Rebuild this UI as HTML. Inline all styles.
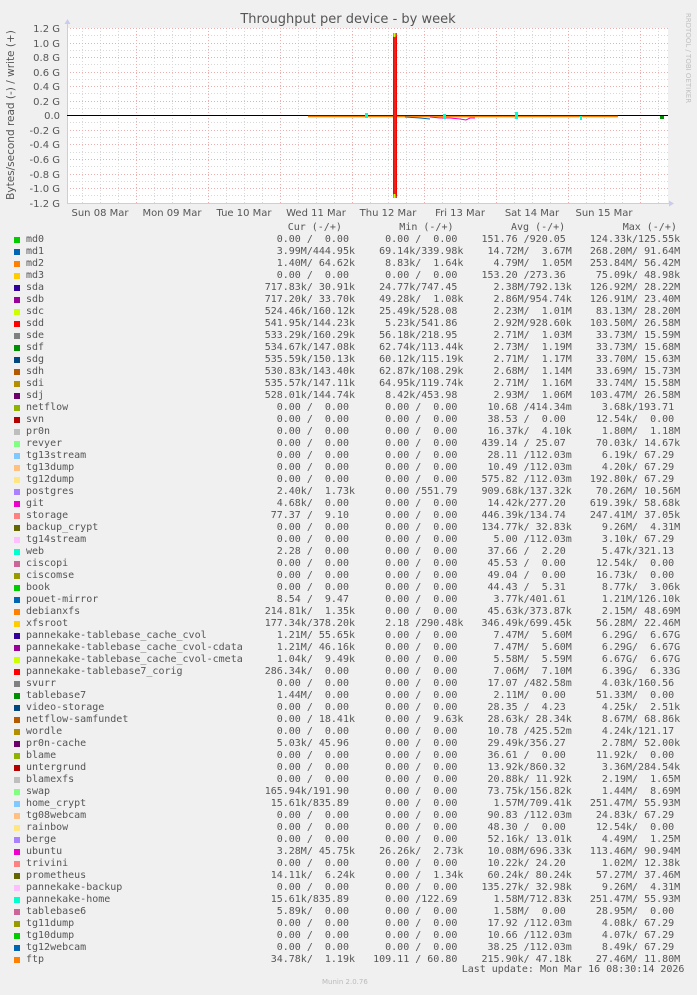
<!DOCTYPE html>
<html><head><meta charset="utf-8">
<style>
html,body{margin:0;padding:0;}
body{width:697px;height:995px;background:#f0f0f0;position:relative;overflow:hidden;font-family:"DejaVu Sans Mono","Liberation Mono",monospace;}
svg{position:absolute;left:0;top:0;}
.r{position:absolute;left:0;height:12px;width:697px;font-size:10px;line-height:12px;color:#555;}
.r span{position:absolute;white-space:pre;top:0;}
.r i{position:absolute;left:14px;top:3px;width:6px;height:6px;}
.n{left:26px}.c1{left:264.7px}.c2{left:373.1px}.c3{left:481.5px}.c4{left:589.9px}
.h{position:absolute;font-size:10px;line-height:12px;color:#555;white-space:pre;top:222px;}
</style></head><body>
<svg width="697" height="222" viewBox="0 0 697 222">
<rect x="67" y="28" width="601" height="175" fill="#fff"/>
<g stroke="#d8d8d8" stroke-width="1" stroke-dasharray="1,2">
<line x1="82.5" y1="28" x2="82.5" y2="203"/><line x1="100.5" y1="28" x2="100.5" y2="203"/><line x1="118.5" y1="28" x2="118.5" y2="203"/>
<line x1="154.5" y1="28" x2="154.5" y2="203"/><line x1="172.5" y1="28" x2="172.5" y2="203"/><line x1="190.5" y1="28" x2="190.5" y2="203"/>
<line x1="226.5" y1="28" x2="226.5" y2="203"/><line x1="244.5" y1="28" x2="244.5" y2="203"/><line x1="262.5" y1="28" x2="262.5" y2="203"/>
<line x1="298.5" y1="28" x2="298.5" y2="203"/><line x1="316.5" y1="28" x2="316.5" y2="203"/><line x1="334.5" y1="28" x2="334.5" y2="203"/>
<line x1="370.5" y1="28" x2="370.5" y2="203"/><line x1="388.5" y1="28" x2="388.5" y2="203"/><line x1="406.5" y1="28" x2="406.5" y2="203"/>
<line x1="442.5" y1="28" x2="442.5" y2="203"/><line x1="460.5" y1="28" x2="460.5" y2="203"/><line x1="478.5" y1="28" x2="478.5" y2="203"/>
<line x1="514.5" y1="28" x2="514.5" y2="203"/><line x1="532.5" y1="28" x2="532.5" y2="203"/><line x1="550.5" y1="28" x2="550.5" y2="203"/>
<line x1="586.5" y1="28" x2="586.5" y2="203"/><line x1="604.5" y1="28" x2="604.5" y2="203"/><line x1="622.5" y1="28" x2="622.5" y2="203"/>
<line x1="658.5" y1="28" x2="658.5" y2="203"/>
<line x1="67" y1="35.5" x2="668" y2="35.5"/><line x1="67" y1="50.5" x2="668" y2="50.5"/><line x1="67" y1="64.5" x2="668" y2="64.5"/>
<line x1="67" y1="79.5" x2="668" y2="79.5"/><line x1="67" y1="93.5" x2="668" y2="93.5"/><line x1="67" y1="108.5" x2="668" y2="108.5"/>
<line x1="67" y1="122.5" x2="668" y2="122.5"/><line x1="67" y1="137.5" x2="668" y2="137.5"/><line x1="67" y1="152.5" x2="668" y2="152.5"/>
<line x1="67" y1="166.5" x2="668" y2="166.5"/><line x1="67" y1="181.5" x2="668" y2="181.5"/><line x1="67" y1="195.5" x2="668" y2="195.5"/>
</g>
<g stroke="#eab0b0" stroke-width="1" stroke-dasharray="1,2">
<line x1="136.5" y1="28" x2="136.5" y2="203"/><line x1="208.5" y1="28" x2="208.5" y2="203"/><line x1="280.5" y1="28" x2="280.5" y2="203"/>
<line x1="352.5" y1="28" x2="352.5" y2="203"/><line x1="424.5" y1="28" x2="424.5" y2="203"/><line x1="496.5" y1="28" x2="496.5" y2="203"/>
<line x1="568.5" y1="28" x2="568.5" y2="203"/><line x1="640.5" y1="28" x2="640.5" y2="203"/>
<line x1="67" y1="28.5" x2="668" y2="28.5"/><line x1="67" y1="43.5" x2="668" y2="43.5"/><line x1="67" y1="57.5" x2="668" y2="57.5"/>
<line x1="67" y1="72.5" x2="668" y2="72.5"/><line x1="67" y1="86.5" x2="668" y2="86.5"/><line x1="67" y1="101.5" x2="668" y2="101.5"/>
<line x1="67" y1="130.5" x2="668" y2="130.5"/><line x1="67" y1="144.5" x2="668" y2="144.5"/><line x1="67" y1="159.5" x2="668" y2="159.5"/>
<line x1="67" y1="174.5" x2="668" y2="174.5"/><line x1="67" y1="188.5" x2="668" y2="188.5"/>
</g>
<line x1="67.5" y1="24" x2="67.5" y2="203" stroke="#c8ccee" stroke-width="1"/>
<line x1="67" y1="203.5" x2="670" y2="203.5" stroke="#c8ccee" stroke-width="1"/>
<polygon points="64.5,24 70.5,24 67.5,19" fill="#c8ccee"/>
<polygon points="669,200.5 669,206.5 674,203.5" fill="#c8ccee"/>
<line x1="67" y1="115.5" x2="668" y2="115.5" stroke="#000" stroke-width="1"/>
<line x1="308" y1="116.5" x2="618" y2="116.5" stroke="#ff8000" stroke-width="1.5"/>
<polyline points="430,117 440,118 450,118 460,119 466,120 470,118 475,118" fill="none" stroke="#ee00cc" stroke-width="1"/>
<polyline points="405,117 420,118 430,119" fill="none" stroke="#0066b3" stroke-width="1"/>
<rect x="365" y="113" width="3" height="5" fill="#00ffcc"/><rect x="443" y="114" width="3" height="5" fill="#00ffcc"/>
<rect x="515" y="112" width="3" height="7" fill="#00ffcc"/><rect x="580" y="116" width="2" height="4" fill="#00ffcc"/>
<rect x="660" y="116" width="4" height="3" fill="#008f00"/>
<rect x="393" y="33" width="4" height="165" fill="#c84a3a"/>
<rect x="393" y="36" width="1.5" height="160" fill="#ff0000"/><rect x="395.5" y="36" width="1.5" height="160" fill="#ff0000"/>
<rect x="393.5" y="33" width="2" height="4" fill="#ccff00"/><rect x="393.5" y="194" width="2" height="4" fill="#ccff00"/>
<g font-family="'DejaVu Sans','Liberation Sans',sans-serif" font-size="10" fill="#555" text-anchor="end">
<text x="60" y="32">1.2 G</text><text x="60" y="47">1.0 G</text><text x="60" y="61">0.8 G</text><text x="60" y="76">0.6 G</text>
<text x="60" y="90">0.4 G</text><text x="60" y="105">0.2 G</text><text x="60" y="119">0.0</text><text x="60" y="134">-0.2 G</text>
<text x="60" y="148">-0.4 G</text><text x="60" y="163">-0.6 G</text><text x="60" y="178">-0.8 G</text><text x="60" y="192">-1.0 G</text><text x="60" y="207">-1.2 G</text>
</g>
<g font-family="'DejaVu Sans','Liberation Sans',sans-serif" font-size="10" fill="#555" text-anchor="middle">
<text x="100" y="216">Sun 08 Mar</text><text x="172" y="216">Mon 09 Mar</text><text x="244" y="216">Tue 10 Mar</text><text x="316" y="216">Wed 11 Mar</text>
<text x="388" y="216">Thu 12 Mar</text><text x="460" y="216">Fri 13 Mar</text><text x="532" y="216">Sat 14 Mar</text><text x="604" y="216">Sun 15 Mar</text>
<text x="348" y="23" font-size="13">Throughput per device - by week</text>
<text transform="translate(14,115) rotate(-90)" font-size="10.5">Bytes/second read (-) / write (+)</text>
<text transform="translate(686,58) rotate(90)" font-size="7" fill="#c0c0c0">RRDTOOL / TOBI OETIKER</text>
</g>
</svg>
<div class="h" style="left:287.7px">Cur (-/+)</div>
<div class="h" style="left:399.3px">Min (-/+)</div>
<div class="h" style="left:511px">Avg (-/+)</div>
<div class="h" style="left:622.7px">Max (-/+)</div>

<div class="r" style="top:234px"><i style="background:#00cc00"></i><span class="n">md0</span><span class="c1">  0.00 /  0.00 </span><span class="c2">  0.00 /  0.00 </span><span class="c3">151.76 /920.05 </span><span class="c4">124.33k/125.55k</span></div>
<div class="r" style="top:246px"><i style="background:#0066b3"></i><span class="n">md1</span><span class="c1">  3.99M/444.95k</span><span class="c2"> 69.14k/339.98k</span><span class="c3"> 14.72M/  3.67M</span><span class="c4">268.20M/ 91.64M</span></div>
<div class="r" style="top:258px"><i style="background:#ff8000"></i><span class="n">md2</span><span class="c1">  1.40M/ 64.62k</span><span class="c2">  8.83k/  1.64k</span><span class="c3">  4.79M/  1.05M</span><span class="c4">253.84M/ 56.42M</span></div>
<div class="r" style="top:270px"><i style="background:#ffcc00"></i><span class="n">md3</span><span class="c1">  0.00 /  0.00 </span><span class="c2">  0.00 /  0.00 </span><span class="c3">153.20 /273.36 </span><span class="c4"> 75.09k/ 48.98k</span></div>
<div class="r" style="top:282px"><i style="background:#330099"></i><span class="n">sda</span><span class="c1">717.83k/ 30.91k</span><span class="c2"> 24.77k/747.45 </span><span class="c3">  2.38M/792.13k</span><span class="c4">126.92M/ 28.22M</span></div>
<div class="r" style="top:294px"><i style="background:#990099"></i><span class="n">sdb</span><span class="c1">717.20k/ 33.70k</span><span class="c2"> 49.28k/  1.08k</span><span class="c3">  2.86M/954.74k</span><span class="c4">126.91M/ 23.40M</span></div>
<div class="r" style="top:306px"><i style="background:#ccff00"></i><span class="n">sdc</span><span class="c1">524.46k/160.12k</span><span class="c2"> 25.49k/528.08 </span><span class="c3">  2.23M/  1.01M</span><span class="c4"> 83.13M/ 28.20M</span></div>
<div class="r" style="top:318px"><i style="background:#ff0000"></i><span class="n">sdd</span><span class="c1">541.95k/144.23k</span><span class="c2">  5.23k/541.86 </span><span class="c3">  2.92M/928.60k</span><span class="c4">103.50M/ 26.58M</span></div>
<div class="r" style="top:330px"><i style="background:#808080"></i><span class="n">sde</span><span class="c1">533.29k/160.29k</span><span class="c2"> 56.18k/218.95 </span><span class="c3">  2.71M/  1.03M</span><span class="c4"> 33.73M/ 15.59M</span></div>
<div class="r" style="top:342px"><i style="background:#008f00"></i><span class="n">sdf</span><span class="c1">534.67k/147.08k</span><span class="c2"> 62.74k/113.44k</span><span class="c3">  2.73M/  1.19M</span><span class="c4"> 33.73M/ 15.68M</span></div>
<div class="r" style="top:354px"><i style="background:#00487d"></i><span class="n">sdg</span><span class="c1">535.59k/150.13k</span><span class="c2"> 60.12k/115.19k</span><span class="c3">  2.71M/  1.17M</span><span class="c4"> 33.70M/ 15.63M</span></div>
<div class="r" style="top:366px"><i style="background:#b35a00"></i><span class="n">sdh</span><span class="c1">530.83k/143.40k</span><span class="c2"> 62.87k/108.29k</span><span class="c3">  2.68M/  1.14M</span><span class="c4"> 33.69M/ 15.73M</span></div>
<div class="r" style="top:378px"><i style="background:#b38f00"></i><span class="n">sdi</span><span class="c1">535.57k/147.11k</span><span class="c2"> 64.95k/119.74k</span><span class="c3">  2.71M/  1.16M</span><span class="c4"> 33.74M/ 15.58M</span></div>
<div class="r" style="top:390px"><i style="background:#6b006b"></i><span class="n">sdj</span><span class="c1">528.01k/144.74k</span><span class="c2">  8.42k/453.98 </span><span class="c3">  2.93M/  1.06M</span><span class="c4">103.47M/ 26.58M</span></div>
<div class="r" style="top:402px"><i style="background:#8fb300"></i><span class="n">netflow</span><span class="c1">  0.00 /  0.00 </span><span class="c2">  0.00 /  0.00 </span><span class="c3"> 10.68 /414.34m</span><span class="c4">  3.68k/193.71 </span></div>
<div class="r" style="top:414px"><i style="background:#b30000"></i><span class="n">svn</span><span class="c1">  0.00 /  0.00 </span><span class="c2">  0.00 /  0.00 </span><span class="c3"> 38.53 /  0.00 </span><span class="c4"> 12.54k/  0.00 </span></div>
<div class="r" style="top:426px"><i style="background:#bebebe"></i><span class="n">pr0n</span><span class="c1">  0.00 /  0.00 </span><span class="c2">  0.00 /  0.00 </span><span class="c3"> 16.37k/  4.10k</span><span class="c4">  1.80M/  1.18M</span></div>
<div class="r" style="top:438px"><i style="background:#80ff80"></i><span class="n">revyer</span><span class="c1">  0.00 /  0.00 </span><span class="c2">  0.00 /  0.00 </span><span class="c3">439.14 / 25.07 </span><span class="c4"> 70.03k/ 14.67k</span></div>
<div class="r" style="top:450px"><i style="background:#80c9ff"></i><span class="n">tg13stream</span><span class="c1">  0.00 /  0.00 </span><span class="c2">  0.00 /  0.00 </span><span class="c3"> 28.11 /112.03m</span><span class="c4">  6.19k/ 67.29 </span></div>
<div class="r" style="top:462px"><i style="background:#ffc080"></i><span class="n">tg13dump</span><span class="c1">  0.00 /  0.00 </span><span class="c2">  0.00 /  0.00 </span><span class="c3"> 10.49 /112.03m</span><span class="c4">  4.20k/ 67.29 </span></div>
<div class="r" style="top:474px"><i style="background:#ffe680"></i><span class="n">tg12dump</span><span class="c1">  0.00 /  0.00 </span><span class="c2">  0.00 /  0.00 </span><span class="c3">575.82 /112.03m</span><span class="c4">192.80k/ 67.29 </span></div>
<div class="r" style="top:486px"><i style="background:#aa80ff"></i><span class="n">postgres</span><span class="c1">  2.40k/  1.73k</span><span class="c2">  0.00 /551.79 </span><span class="c3">909.68k/137.32k</span><span class="c4"> 70.26M/ 10.56M</span></div>
<div class="r" style="top:498px"><i style="background:#ee00cc"></i><span class="n">git</span><span class="c1">  4.68k/  0.00 </span><span class="c2">  0.00 /  0.00 </span><span class="c3"> 14.42k/277.20 </span><span class="c4">619.39k/ 58.68k</span></div>
<div class="r" style="top:510px"><i style="background:#ff8080"></i><span class="n">storage</span><span class="c1"> 77.37 /  9.10 </span><span class="c2">  0.00 /  0.00 </span><span class="c3">446.39k/134.74 </span><span class="c4">247.41M/ 37.05k</span></div>
<div class="r" style="top:522px"><i style="background:#666600"></i><span class="n">backup_crypt</span><span class="c1">  0.00 /  0.00 </span><span class="c2">  0.00 /  0.00 </span><span class="c3">134.77k/ 32.83k</span><span class="c4">  9.26M/  4.31M</span></div>
<div class="r" style="top:534px"><i style="background:#ffbfff"></i><span class="n">tg14stream</span><span class="c1">  0.00 /  0.00 </span><span class="c2">  0.00 /  0.00 </span><span class="c3">  5.00 /112.03m</span><span class="c4">  3.10k/ 67.29 </span></div>
<div class="r" style="top:546px"><i style="background:#00ffcc"></i><span class="n">web</span><span class="c1">  2.28 /  0.00 </span><span class="c2">  0.00 /  0.00 </span><span class="c3"> 37.66 /  2.20 </span><span class="c4">  5.47k/321.13 </span></div>
<div class="r" style="top:558px"><i style="background:#cc6699"></i><span class="n">ciscopi</span><span class="c1">  0.00 /  0.00 </span><span class="c2">  0.00 /  0.00 </span><span class="c3"> 45.53 /  0.00 </span><span class="c4"> 12.54k/  0.00 </span></div>
<div class="r" style="top:570px"><i style="background:#999900"></i><span class="n">ciscomse</span><span class="c1">  0.00 /  0.00 </span><span class="c2">  0.00 /  0.00 </span><span class="c3"> 49.04 /  0.00 </span><span class="c4"> 16.73k/  0.00 </span></div>
<div class="r" style="top:582px"><i style="background:#00cc00"></i><span class="n">book</span><span class="c1">  0.00 /  0.00 </span><span class="c2">  0.00 /  0.00 </span><span class="c3"> 44.43 /  5.31 </span><span class="c4">  8.77k/  3.06k</span></div>
<div class="r" style="top:594px"><i style="background:#0066b3"></i><span class="n">pouet-mirror</span><span class="c1">  8.54 /  9.47 </span><span class="c2">  0.00 /  0.00 </span><span class="c3">  3.77k/401.61 </span><span class="c4">  1.21M/126.10k</span></div>
<div class="r" style="top:606px"><i style="background:#ff8000"></i><span class="n">debianxfs</span><span class="c1">214.81k/  1.35k</span><span class="c2">  0.00 /  0.00 </span><span class="c3"> 45.63k/373.87k</span><span class="c4">  2.15M/ 48.69M</span></div>
<div class="r" style="top:618px"><i style="background:#ffcc00"></i><span class="n">xfsroot</span><span class="c1">177.34k/378.20k</span><span class="c2">  2.18 /290.48k</span><span class="c3">346.49k/699.45k</span><span class="c4"> 56.28M/ 22.46M</span></div>
<div class="r" style="top:630px"><i style="background:#330099"></i><span class="n">pannekake-tablebase_cache_cvol</span><span class="c1">  1.21M/ 55.65k</span><span class="c2">  0.00 /  0.00 </span><span class="c3">  7.47M/  5.60M</span><span class="c4">  6.29G/  6.67G</span></div>
<div class="r" style="top:642px"><i style="background:#990099"></i><span class="n">pannekake-tablebase_cache_cvol-cdata</span><span class="c1">  1.21M/ 46.16k</span><span class="c2">  0.00 /  0.00 </span><span class="c3">  7.47M/  5.60M</span><span class="c4">  6.29G/  6.67G</span></div>
<div class="r" style="top:654px"><i style="background:#ccff00"></i><span class="n">pannekake-tablebase_cache_cvol-cmeta</span><span class="c1">  1.04k/  9.49k</span><span class="c2">  0.00 /  0.00 </span><span class="c3">  5.58M/  5.59M</span><span class="c4">  6.67G/  6.67G</span></div>
<div class="r" style="top:666px"><i style="background:#ff0000"></i><span class="n">pannekake-tablebase7_corig</span><span class="c1">286.34k/  0.00 </span><span class="c2">  0.00 /  0.00 </span><span class="c3">  7.06M/  7.10M</span><span class="c4">  6.39G/  6.33G</span></div>
<div class="r" style="top:678px"><i style="background:#808080"></i><span class="n">svurr</span><span class="c1">  0.00 /  0.00 </span><span class="c2">  0.00 /  0.00 </span><span class="c3"> 17.07 /482.58m</span><span class="c4">  4.03k/160.56 </span></div>
<div class="r" style="top:690px"><i style="background:#008f00"></i><span class="n">tablebase7</span><span class="c1">  1.44M/  0.00 </span><span class="c2">  0.00 /  0.00 </span><span class="c3">  2.11M/  0.00 </span><span class="c4"> 51.33M/  0.00 </span></div>
<div class="r" style="top:702px"><i style="background:#00487d"></i><span class="n">video-storage</span><span class="c1">  0.00 /  0.00 </span><span class="c2">  0.00 /  0.00 </span><span class="c3"> 28.35 /  4.23 </span><span class="c4">  4.25k/  2.51k</span></div>
<div class="r" style="top:714px"><i style="background:#b35a00"></i><span class="n">netflow-samfundet</span><span class="c1">  0.00 / 18.41k</span><span class="c2">  0.00 /  9.63k</span><span class="c3"> 28.63k/ 28.34k</span><span class="c4">  8.67M/ 68.86k</span></div>
<div class="r" style="top:726px"><i style="background:#b38f00"></i><span class="n">wordle</span><span class="c1">  0.00 /  0.00 </span><span class="c2">  0.00 /  0.00 </span><span class="c3"> 10.78 /425.52m</span><span class="c4">  4.24k/121.17 </span></div>
<div class="r" style="top:738px"><i style="background:#6b006b"></i><span class="n">pr0n-cache</span><span class="c1">  5.03k/ 45.96 </span><span class="c2">  0.00 /  0.00 </span><span class="c3"> 29.49k/356.27 </span><span class="c4">  2.78M/ 52.00k</span></div>
<div class="r" style="top:750px"><i style="background:#8fb300"></i><span class="n">blame</span><span class="c1">  0.00 /  0.00 </span><span class="c2">  0.00 /  0.00 </span><span class="c3"> 36.61 /  0.00 </span><span class="c4"> 11.92k/  0.00 </span></div>
<div class="r" style="top:762px"><i style="background:#b30000"></i><span class="n">untergrund</span><span class="c1">  0.00 /  0.00 </span><span class="c2">  0.00 /  0.00 </span><span class="c3"> 13.92k/860.32 </span><span class="c4">  3.36M/284.54k</span></div>
<div class="r" style="top:774px"><i style="background:#bebebe"></i><span class="n">blamexfs</span><span class="c1">  0.00 /  0.00 </span><span class="c2">  0.00 /  0.00 </span><span class="c3"> 20.88k/ 11.92k</span><span class="c4">  2.19M/  1.65M</span></div>
<div class="r" style="top:786px"><i style="background:#80ff80"></i><span class="n">swap</span><span class="c1">165.94k/191.90 </span><span class="c2">  0.00 /  0.00 </span><span class="c3"> 73.75k/156.82k</span><span class="c4">  1.44M/  8.69M</span></div>
<div class="r" style="top:798px"><i style="background:#80c9ff"></i><span class="n">home_crypt</span><span class="c1"> 15.61k/835.89 </span><span class="c2">  0.00 /  0.00 </span><span class="c3">  1.57M/709.41k</span><span class="c4">251.47M/ 55.93M</span></div>
<div class="r" style="top:810px"><i style="background:#ffc080"></i><span class="n">tg08webcam</span><span class="c1">  0.00 /  0.00 </span><span class="c2">  0.00 /  0.00 </span><span class="c3"> 90.83 /112.03m</span><span class="c4"> 24.83k/ 67.29 </span></div>
<div class="r" style="top:822px"><i style="background:#ffe680"></i><span class="n">rainbow</span><span class="c1">  0.00 /  0.00 </span><span class="c2">  0.00 /  0.00 </span><span class="c3"> 48.30 /  0.00 </span><span class="c4"> 12.54k/  0.00 </span></div>
<div class="r" style="top:834px"><i style="background:#aa80ff"></i><span class="n">berge</span><span class="c1">  0.00 /  0.00 </span><span class="c2">  0.00 /  0.00 </span><span class="c3"> 52.16k/ 13.01k</span><span class="c4">  4.49M/  1.25M</span></div>
<div class="r" style="top:846px"><i style="background:#ee00cc"></i><span class="n">ubuntu</span><span class="c1">  3.28M/ 45.75k</span><span class="c2"> 26.26k/  2.73k</span><span class="c3"> 10.08M/696.33k</span><span class="c4">113.46M/ 90.94M</span></div>
<div class="r" style="top:858px"><i style="background:#ff8080"></i><span class="n">trivini</span><span class="c1">  0.00 /  0.00 </span><span class="c2">  0.00 /  0.00 </span><span class="c3"> 10.22k/ 24.20 </span><span class="c4">  1.02M/ 12.38k</span></div>
<div class="r" style="top:870px"><i style="background:#666600"></i><span class="n">prometheus</span><span class="c1"> 14.11k/  6.24k</span><span class="c2">  0.00 /  1.34k</span><span class="c3"> 60.24k/ 80.24k</span><span class="c4"> 57.27M/ 37.46M</span></div>
<div class="r" style="top:882px"><i style="background:#ffbfff"></i><span class="n">pannekake-backup</span><span class="c1">  0.00 /  0.00 </span><span class="c2">  0.00 /  0.00 </span><span class="c3">135.27k/ 32.98k</span><span class="c4">  9.26M/  4.31M</span></div>
<div class="r" style="top:894px"><i style="background:#00ffcc"></i><span class="n">pannekake-home</span><span class="c1"> 15.61k/835.89 </span><span class="c2">  0.00 /122.69 </span><span class="c3">  1.58M/712.83k</span><span class="c4">251.47M/ 55.93M</span></div>
<div class="r" style="top:906px"><i style="background:#cc6699"></i><span class="n">tablebase6</span><span class="c1">  5.89k/  0.00 </span><span class="c2">  0.00 /  0.00 </span><span class="c3">  1.58M/  0.00 </span><span class="c4"> 28.95M/  0.00 </span></div>
<div class="r" style="top:918px"><i style="background:#999900"></i><span class="n">tg11dump</span><span class="c1">  0.00 /  0.00 </span><span class="c2">  0.00 /  0.00 </span><span class="c3"> 17.92 /112.03m</span><span class="c4">  4.08k/ 67.29 </span></div>
<div class="r" style="top:930px"><i style="background:#00cc00"></i><span class="n">tg10dump</span><span class="c1">  0.00 /  0.00 </span><span class="c2">  0.00 /  0.00 </span><span class="c3"> 10.66 /112.03m</span><span class="c4">  4.07k/ 67.29 </span></div>
<div class="r" style="top:942px"><i style="background:#0066b3"></i><span class="n">tg12webcam</span><span class="c1">  0.00 /  0.00 </span><span class="c2">  0.00 /  0.00 </span><span class="c3"> 38.25 /112.03m</span><span class="c4">  8.49k/ 67.29 </span></div>
<div class="r" style="top:954px"><i style="background:#ff8000"></i><span class="n">ftp</span><span class="c1"> 34.78k/  1.19k</span><span class="c2">109.11 / 60.80 </span><span class="c3">215.90k/ 47.18k</span><span class="c4"> 27.46M/ 11.80M</span></div>
<div class="h" style="top:964px;left:461.7px">Last update: Mon Mar 16 08:30:14 2026</div>
<div style="position:absolute;top:978px;left:322px;font-family:'DejaVu Sans',sans-serif;font-size:7px;color:#bbb;">Munin 2.0.76</div>
</body></html>
